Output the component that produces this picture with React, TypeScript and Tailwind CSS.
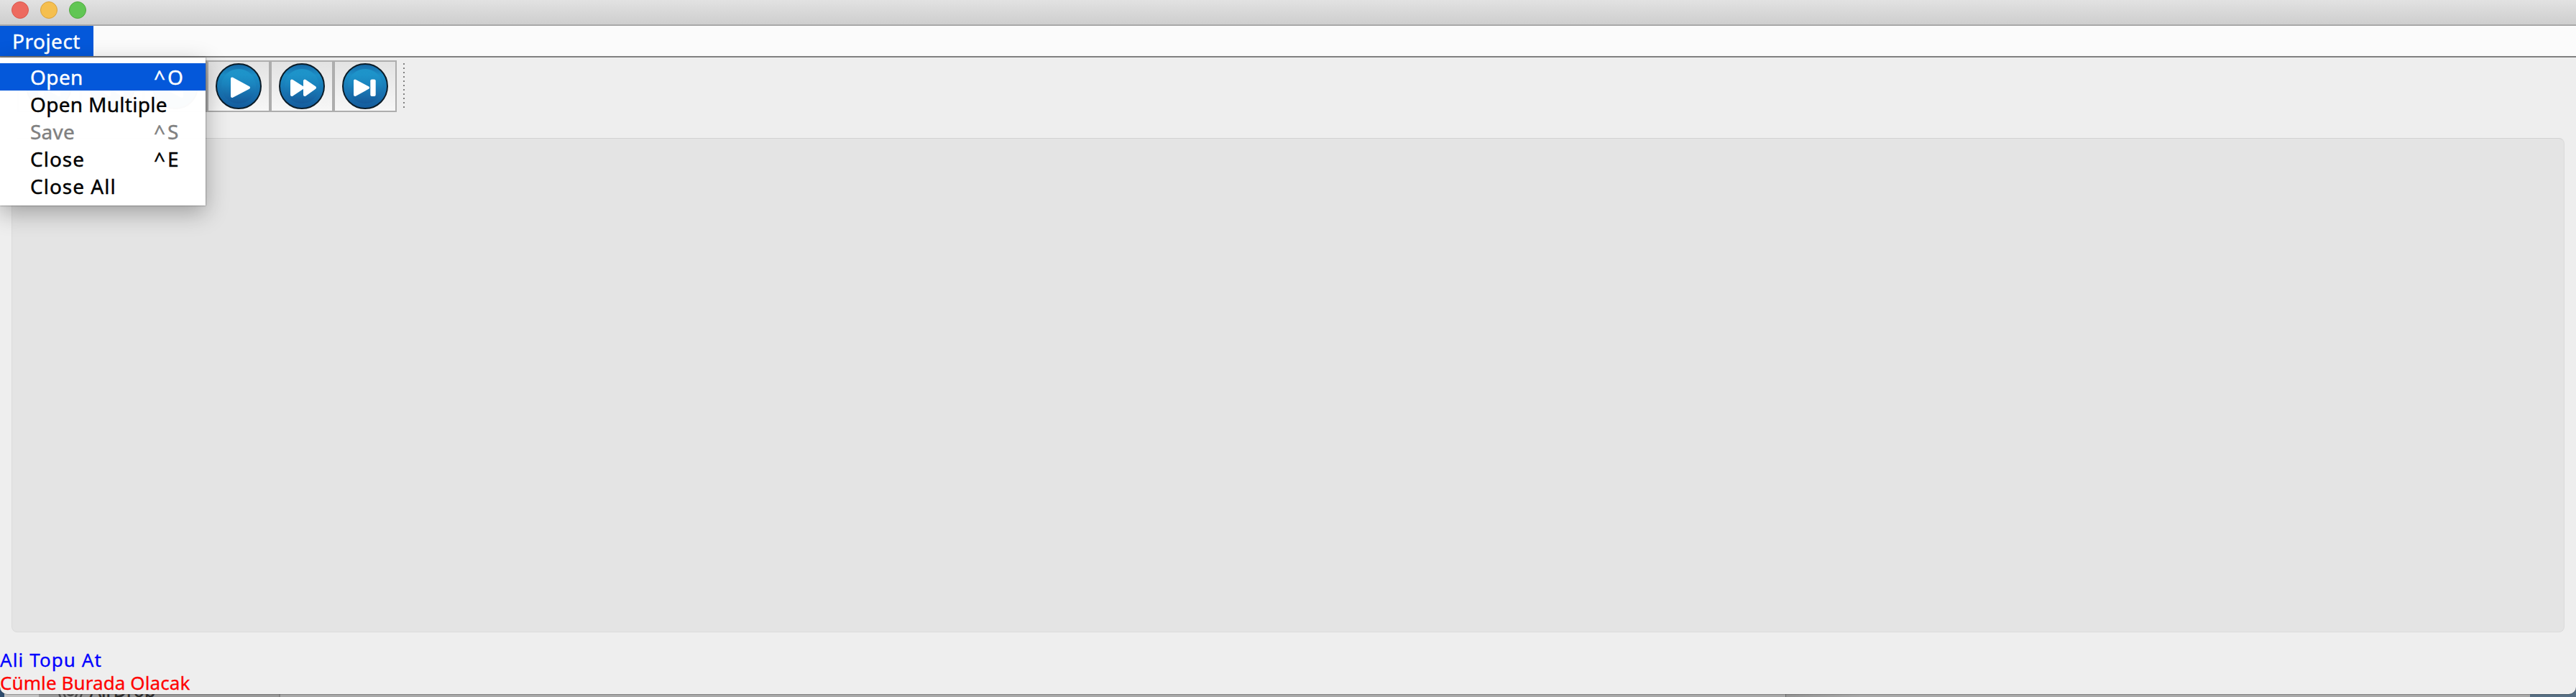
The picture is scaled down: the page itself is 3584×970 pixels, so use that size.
import React from "react";

type Glyph = "play" | "forward" | "next" | "rewind" | "back" | "prev";

function RoundIcon({ glyph }: { glyph: Glyph }) {
  const flip = glyph === "rewind" || glyph === "back" || glyph === "prev";
  const id = "g-" + glyph;
  return (
    <svg width="64" height="64" viewBox="0 0 64 64" className="block">
      <defs>
        <linearGradient id={id} x1="0" y1="0" x2="0" y2="1">
          <stop offset="0" stopColor="#1668a6" />
          <stop offset="0.25" stopColor="#1c8ec6" />
          <stop offset="0.6" stopColor="#1876b4" />
          <stop offset="1" stopColor="#145a9b" />
        </linearGradient>
        <linearGradient id={id + "-i"} x1="0" y1="0" x2="0" y2="1">
          <stop offset="0" stopColor="#209fd2" />
          <stop offset="0.45" stopColor="#1b86c0" />
          <stop offset="1" stopColor="#155596" />
        </linearGradient>
      </defs>
      <circle cx="32" cy="32" r="31" fill={"url(#" + id + ")"} stroke="#0b1c28" strokeWidth="2" />
      <circle cx="32" cy="32" r="24" fill={"url(#" + id + "-i)"} opacity="0.7" />
      <g
        fill="#fff"
        stroke="#fff"
        strokeWidth="4"
        strokeLinejoin="round"
        transform={flip ? "translate(64 0) scale(-1 1)" : undefined}
      >
        {(glyph === "play" || glyph === "back") && <path d="M23 21.500V46L46 34Z" />}
        {(glyph === "forward" || glyph === "rewind") && (
          <>
            <path d="M18 24.500V44L33 34Z" />
            <path d="M36 24.500V44L50 34Z" />
          </>
        )}
        {(glyph === "next" || glyph === "prev") && (
          <>
            <path d="M18 24.500V44L36 34Z" />
            <path d="M41.300 24.500H44.700V44H41.300Z" />
          </>
        )}
      </g>
    </svg>
  );
}

function ToolButton({ glyph }: { glyph: Glyph }) {
  return (
    <div className="h-[72px] w-[88px] border-2 border-[#adadad] bg-linear-to-b from-[#e3e3e3] to-[#f7f7f7] pt-0.5 pl-2.5">
      <RoundIcon glyph={glyph} />
    </div>
  );
}

interface MenuRowProps {
  label: string;
  tracking: string;
  keys?: string;
  state?: "active" | "disabled";
}

function MenuRow({ label, tracking, keys, state }: MenuRowProps) {
  const tone =
    state === "active" ? "bg-[#0458da] text-white" : state === "disabled" ? "text-[#808080]" : "text-black";
  return (
    <div
      className={
        "flex h-[38px] items-center pl-[42px] text-[28px] leading-[38px] [-webkit-text-stroke:0.4px_currentColor] " +
        tone
      }
    >
      <span className={"w-[172px] whitespace-nowrap " + tracking}>{label}</span>
      <span className="tracking-[3px] whitespace-nowrap">{keys}</span>
    </div>
  );
}

function Backdrop() {
  return (
    <div className="absolute bottom-0 left-0 flex h-5 w-[3584px] overflow-hidden">
      <div className="w-1.5 bg-[#2f4d6e]" />
      <div className="w-12 bg-[#c4c4c4]" />
      <div className="flex w-[334px] items-end bg-[#999999] pl-[26px]">
        <svg width="36" height="20" viewBox="0 0 36 20" fill="none" stroke="#4c4c4c" strokeWidth="2.500">
          <path d="M2 14Q4 24 12 30" />
          <path d="M8 12Q9 20 15 24" />
          <path d="M34 14Q32 24 24 30" />
          <path d="M28 12Q27 20 21 24" />
          <path d="M13 14Q18 22 23 14" />
        </svg>
        <span className="ml-[9px] h-5 text-[25px] leading-5 text-[#2b2b2b] [-webkit-text-stroke:0.5px_currentColor]">
          AirDrop
        </span>
      </div>
      <div className="w-0.5 bg-[#858585]" />
      <div className="w-[2094px] bg-[#a8a8a8]" />
      <div className="w-px bg-[#6e6e6e]" />
      <div className="w-[1035px] bg-linear-to-r from-[#949494] via-[#a9a9a9] via-10% to-[#a9a9a9]" />
      <div className="grow bg-[#587085]" />
    </div>
  );
}

export default function App() {
  return (
    <div className="relative h-[970px] w-[3584px] overflow-hidden font-['Noto_Sans',sans-serif]">
      <Backdrop />
      <div className="relative z-10 flex h-[966px] flex-col rounded-b-[10px] bg-[#eeeeee] shadow-[0_1px_0_rgba(0,0,0,0.25)]">
        <div className="flex h-9 shrink-0 gap-4 border-b-2 border-[#a8a8a8] bg-linear-to-b from-[#e2e2e2] to-[#cecece] pt-0.5 pl-4">
          <i className="size-6 rounded-full border border-[#d9584e] bg-[#ed6a5f]" />
          <i className="size-6 rounded-full border border-[#d9a23c] bg-[#f5bf4f]" />
          <i className="size-6 rounded-full border border-[#52a940] bg-[#61c654]" />
        </div>
        <div className="flex h-11 shrink-0 border-b-2 border-[#808080] bg-[#fbfbfb]">
          <div className="h-[42px] w-[130px] bg-[#0458da] pl-[17px] text-[28px] leading-[43px] tracking-[0.5px] text-white [-webkit-text-stroke:0.4px_currentColor]">
            Project
          </div>
        </div>
        <div className="flex h-28 shrink-0 pt-1 pl-6">
          <ToolButton glyph="prev" />
          <ToolButton glyph="rewind" />
          <ToolButton glyph="back" />
          <ToolButton glyph="play" />
          <ToolButton glyph="forward" />
          <ToolButton glyph="next" />
          <div className="mt-1 ml-[9px] h-[62px] w-0.5 bg-[repeating-linear-gradient(to_bottom,#808080_0_2px,transparent_2px_6px)]" />
        </div>
        <div className="mx-4 h-[688px] shrink-0 rounded-[8px] border border-[#dbdbdb] border-t-[#d2d2d2] bg-[#e4e4e4]" />
        <div className="pt-[22px] text-[26px] leading-8 whitespace-nowrap [-webkit-text-stroke:0.3px_currentColor]">
          <div className="tracking-[1.1px] text-[#0000ff]">Ali Topu At</div>
          <div className="tracking-[0.1px] text-[#ff0000]">Cümle Burada Olacak</div>
        </div>
      </div>
      <div className="absolute top-20 left-0 z-20 h-[206px] w-[286px] bg-white/98 pt-2 shadow-[0_10px_30px_rgba(0,0,0,0.3),0_0_2px_rgba(0,0,0,0.6)]">
        <MenuRow label="Open" tracking="tracking-[0.4px]" keys="^O" state="active" />
        <MenuRow label="Open Multiple" tracking="tracking-[0.3px]" />
        <MenuRow label="Save" tracking="tracking-[0.2px]" keys="^S" state="disabled" />
        <MenuRow label="Close" tracking="tracking-[1px]" keys="^E" />
        <MenuRow label="Close All" tracking="tracking-[1px]" />
      </div>
    </div>
  );
}
